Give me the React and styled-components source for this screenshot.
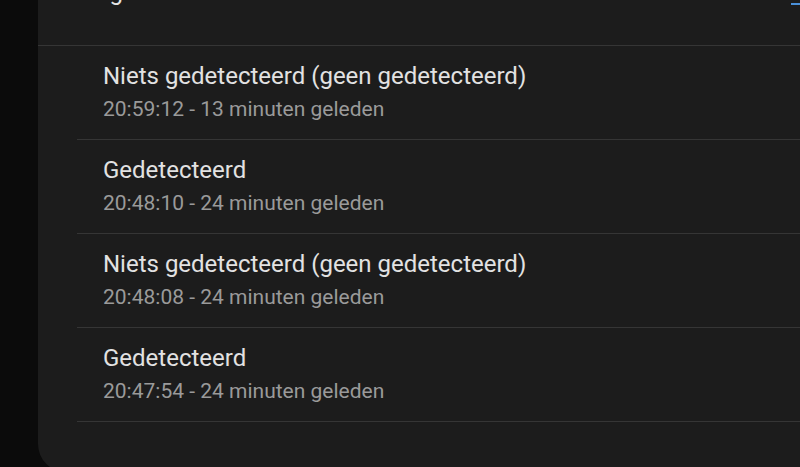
import styled, { createGlobalStyle } from "styled-components";

const GlobalStyle = createGlobalStyle`
  html, body {
    margin: 0;
    padding: 0;
    background: #0b0b0b;
    overflow: hidden;
  }
  #root {
    height: 467px;
  }
`;

const entries = [
  { state: "Niets gedetecteerd (geen gedetecteerd)", time: "20:59:12", ago: "13 minuten geleden" },
  { state: "Gedetecteerd", time: "20:48:10", ago: "24 minuten geleden" },
  { state: "Niets gedetecteerd (geen gedetecteerd)", time: "20:48:08", ago: "24 minuten geleden" },
  { state: "Gedetecteerd", time: "20:47:54", ago: "24 minuten geleden" },
];

const App = () => {
  return (
    <>
      <GlobalStyle />
      <Page>
        <Gutter />
        <Card>
          <Header>
            <Title>Logboek</Title>
            <MoreLink />
          </Header>
          <List>
            {entries.map((e, i) => (
              <Row key={i}>
                <State>{e.state}</State>
                <Meta>
                  {e.time} - {e.ago}
                </Meta>
              </Row>
            ))}
          </List>
        </Card>
      </Page>
    </>
  );
};
export default App;

const Page = styled.div`
    display: flex;
    height: 467px;
    overflow: hidden;
    font-family: Roboto, "Noto Sans", sans-serif;
  `,
  Gutter = styled.div`
    width: 38px;
    flex-shrink: 0;
    background: #0b0b0b;
  `,
  Card = styled.div`
    flex: 1;
    margin-right: -30px;
    margin-top: -40px;
    height: 512px;
    background: #1c1c1c;
    border-radius: 0 0 0 28px;
  `,
  Header = styled.div`
    display: flex;
    justify-content: space-between;
    align-items: flex-end;
    height: 85px;
    padding-left: 45px;
    box-sizing: border-box;
  `,
  Title = styled.h2`
    margin: 0;
    font-size: 24px;
    font-weight: 400;
    color: #e4e4e4;
    line-height: 24px;
    margin-bottom: 41px;
  `,
  MoreLink = styled.div`
    width: 39px;
    height: 2px;
    background: #4a90d9;
    margin-bottom: 40px;
  `,
  List = styled.ul`
    list-style: none;
    margin: 0;
    padding: 0 0 0 39px;
    border-top: 1px solid #353535;
  `,
  Row = styled.li`
    height: 94px;
    padding-left: 26px;
    padding-top: 16px;
    box-sizing: border-box;
    border-bottom: 1px solid #353535;
  `,
  State = styled.div`
    font-size: 24px;
    line-height: 28px;
    color: #e2e2e2;
  `,
  Meta = styled.div`
    margin-top: 7px;
    font-size: 21px;
    line-height: 24px;
    color: #9a9a9a;
  `;
